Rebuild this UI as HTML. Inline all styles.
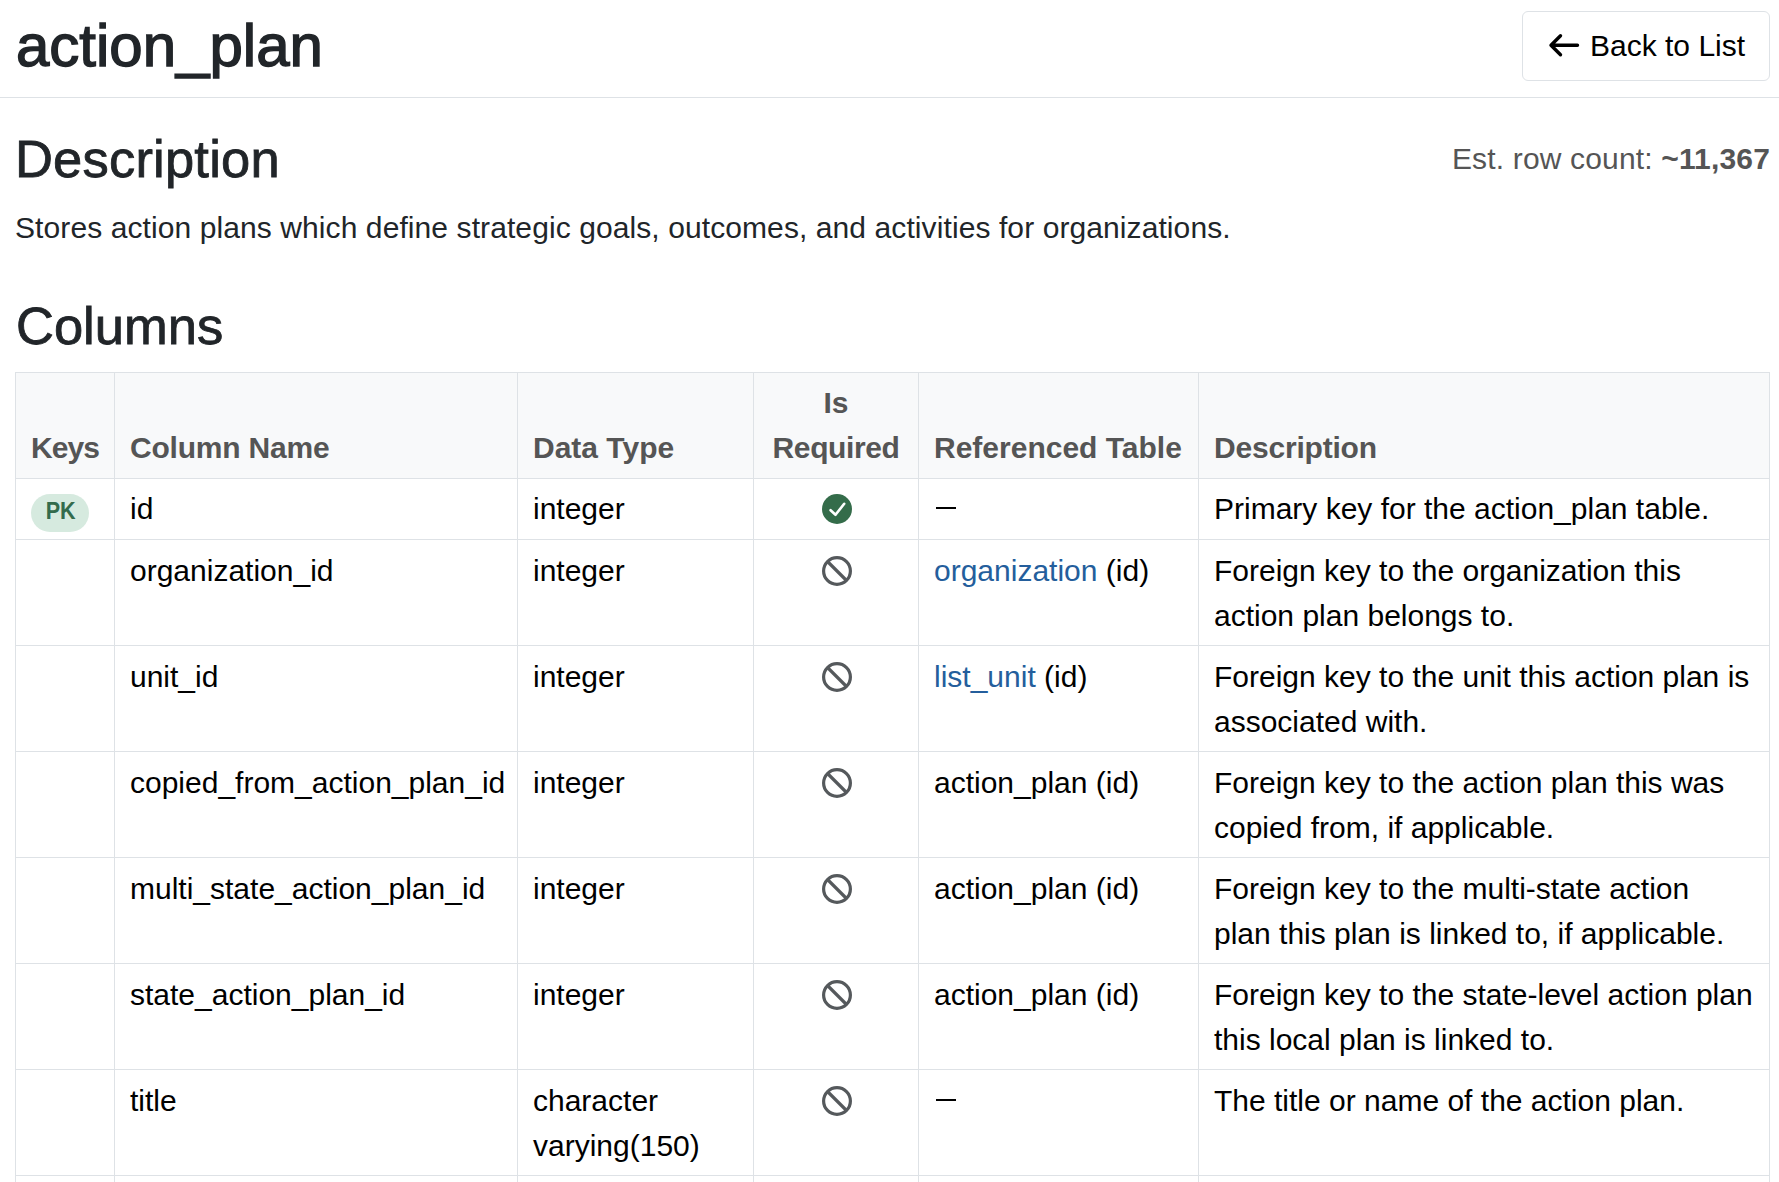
<!DOCTYPE html>
<html>
<head>
<meta charset="utf-8">
<style>
html,body{margin:0;padding:0;background:#fff;}
body{width:1779px;height:1182px;overflow:hidden;position:relative;font-family:"Liberation Sans",sans-serif;color:#212529;}
.abs{position:absolute;white-space:nowrap;}
.topbar{position:absolute;left:0;top:0;width:1779px;height:97px;border-bottom:1px solid #dee2e6;}
.title{left:16px;top:10px;font-size:60px;line-height:72px;-webkit-text-stroke:1.4px #212529;}
.btn{position:absolute;left:1522px;top:11px;width:246px;height:68px;border:1px solid #dee2e6;border-radius:6px;background:#fff;}
.btn svg{position:absolute;left:17px;top:13px;}
.btn .lbl{position:absolute;left:67px;top:11px;font-size:30px;line-height:45px;color:#000;white-space:nowrap;}
.h3{font-size:52.5px;line-height:63px;-webkit-text-stroke:0.8px #212529;}
.est{right:9px;top:136px;font-size:30px;line-height:45px;color:#555;letter-spacing:0.16px;}
.est b{font-weight:700;}
.para{left:15px;top:205px;font-size:30px;line-height:45px;letter-spacing:0.09px;}
table{position:absolute;left:15px;top:372px;border-collapse:separate;border-spacing:0;border-left:1px solid #dee2e6;border-top:1px solid #dee2e6;table-layout:fixed;width:1755px;}
td,th{border-right:1px solid #dee2e6;border-bottom:1px solid #dee2e6;padding:7px 15px 8px 15px;font-size:30px;line-height:45px;text-align:left;vertical-align:top;white-space:nowrap;color:#000;box-sizing:border-box;}
th{background:#f8f9fa;color:#555;font-weight:700;vertical-align:bottom;}
th.c,td.c{text-align:center;}
tr.h1r td{height:61px;}
tr.r td{height:106px;padding-top:8px;padding-bottom:7px;}
thead th{height:106px;}
a{color:#245e9c;text-decoration:none;}
.pk{position:absolute;left:15px;top:15px;width:58px;height:38px;border-radius:19px;background:#d6eadf;color:#336b4c;font-weight:700;font-size:24px;line-height:33px;text-align:center;}
.pk i{font-style:normal;display:inline-block;transform:scaleX(0.9);position:relative;left:1px;}
.ico{display:inline-block;vertical-align:top;margin-top:7.5px;position:relative;left:1px;}
.dash{display:inline-block;width:20px;height:2px;background:#000;vertical-align:top;margin-top:21px;margin-left:2px;}
</style>
</head>
<body>
<div class="topbar"></div>
<div class="abs title">action_plan</div>
<div class="btn">
  <svg width="50" height="40" viewBox="0 0 50 40"><path d="M37.5 20.3H11M20.5 10.8 11 20.3l9.5 9.5" fill="none" stroke="#000" stroke-width="3.4" stroke-linecap="round" stroke-linejoin="round"/></svg>
  <span class="lbl">Back to List</span>
</div>
<div class="abs h3" style="left:15px;top:127px;letter-spacing:0.2px;">Description</div>
<div class="abs est">Est. row count: <b>~11,367</b></div>
<div class="abs para">Stores action plans which define strategic goals, outcomes, and activities for organizations.</div>
<div class="abs h3" style="left:16px;top:294px;">Columns</div>

<table>
<colgroup><col style="width:99px"><col style="width:403px"><col style="width:236px"><col style="width:165px"><col style="width:280px"><col style="width:571px"></colgroup>
<thead><tr>
<th><span style="letter-spacing:-0.9px">Keys</span></th><th><span style="letter-spacing:-0.2px">Column Name</span></th><th>Data Type</th><th class="c">Is<br><span style="letter-spacing:-0.4px">Required</span></th><th>Referenced Table</th><th><span style="letter-spacing:-0.2px">Description</span></th>
</tr></thead>
<tbody>
<tr class="h1r"><td style="position:relative"><span class="pk"><i>PK</i></span></td><td>id</td><td>integer</td><td class="c"><svg class="ico" width="30" height="30" viewBox="0 0 30 30"><circle cx="15" cy="15" r="15" fill="#346c4a"/><path d="M8.6 16.2l4.9 4.6 8.7-11" fill="none" stroke="#fff" stroke-width="2.6" stroke-linecap="round" stroke-linejoin="round"/></svg></td><td><span class="dash"></span></td><td>Primary key for the action_plan table.</td></tr>
<tr class="r"><td></td><td>organization_id</td><td>integer</td><td class="c"><svg class="ico" width="30" height="30" viewBox="0 0 30 30"><circle cx="15" cy="15" r="13.4" fill="none" stroke="#55595c" stroke-width="3.2"/><path d="M5.5 5.5l19 19" stroke="#55595c" stroke-width="3.2"/></svg></td><td><a>organization</a> (id)</td><td>Foreign key to the organization this<br>action plan belongs to.</td></tr>
<tr class="r"><td></td><td>unit_id</td><td>integer</td><td class="c"><svg class="ico" width="30" height="30" viewBox="0 0 30 30"><circle cx="15" cy="15" r="13.4" fill="none" stroke="#55595c" stroke-width="3.2"/><path d="M5.5 5.5l19 19" stroke="#55595c" stroke-width="3.2"/></svg></td><td><a>list_unit</a> (id)</td><td>Foreign key to the unit this action plan is<br>associated with.</td></tr>
<tr class="r"><td></td><td>copied_from_action_plan_id</td><td>integer</td><td class="c"><svg class="ico" width="30" height="30" viewBox="0 0 30 30"><circle cx="15" cy="15" r="13.4" fill="none" stroke="#55595c" stroke-width="3.2"/><path d="M5.5 5.5l19 19" stroke="#55595c" stroke-width="3.2"/></svg></td><td>action_plan (id)</td><td>Foreign key to the action plan this was<br>copied from, if applicable.</td></tr>
<tr class="r"><td></td><td>multi_state_action_plan_id</td><td>integer</td><td class="c"><svg class="ico" width="30" height="30" viewBox="0 0 30 30"><circle cx="15" cy="15" r="13.4" fill="none" stroke="#55595c" stroke-width="3.2"/><path d="M5.5 5.5l19 19" stroke="#55595c" stroke-width="3.2"/></svg></td><td>action_plan (id)</td><td>Foreign key to the multi-state action<br>plan this plan is linked to, if applicable.</td></tr>
<tr class="r"><td></td><td>state_action_plan_id</td><td>integer</td><td class="c"><svg class="ico" width="30" height="30" viewBox="0 0 30 30"><circle cx="15" cy="15" r="13.4" fill="none" stroke="#55595c" stroke-width="3.2"/><path d="M5.5 5.5l19 19" stroke="#55595c" stroke-width="3.2"/></svg></td><td>action_plan (id)</td><td>Foreign key to the state-level action plan<br>this local plan is linked to.</td></tr>
<tr class="r"><td></td><td>title</td><td>character<br>varying(150)</td><td class="c"><svg class="ico" width="30" height="30" viewBox="0 0 30 30"><circle cx="15" cy="15" r="13.4" fill="none" stroke="#55595c" stroke-width="3.2"/><path d="M5.5 5.5l19 19" stroke="#55595c" stroke-width="3.2"/></svg></td><td><span class="dash"></span></td><td>The title or name of the action plan.</td></tr>
<tr class="r"><td></td><td>description</td><td>text</td><td class="c"><svg class="ico" width="30" height="30" viewBox="0 0 30 30"><circle cx="15" cy="15" r="13.4" fill="none" stroke="#55595c" stroke-width="3.2"/><path d="M5.5 5.5l19 19" stroke="#55595c" stroke-width="3.2"/></svg></td><td><span class="dash"></span></td><td>A detailed description of the action plan.</td></tr>
</tbody>
</table>
</body>
</html>
